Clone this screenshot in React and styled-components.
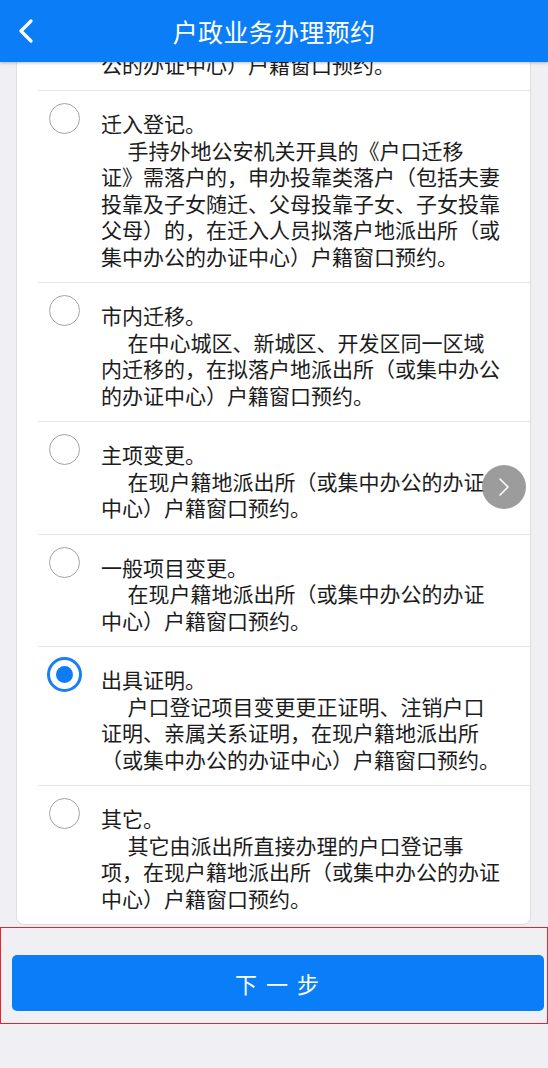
import React, { useState } from "react";
import styled, { createGlobalStyle } from "styled-components";

const GlobalStyle = createGlobalStyle`
    html, body {
        margin: 0;
        padding: 0;
        background: #efeff4;
        font-family: "Noto Sans CJK SC", "Noto Sans", sans-serif;
    }
`;

const items = [
    {
        id: "birth",
        title: "出生登记。",
        desc: "新生儿申报出生登记的，在其父亲或母亲常住户口所在地的辖区派出所（或集中办公的办证中心）户籍窗口预约。",
    },
    {
        id: "movein",
        title: "迁入登记。",
        desc: "手持外地公安机关开具的《户口迁移证》需落户的，申办投靠类落户（包括夫妻投靠及子女随迁、父母投靠子女、子女投靠父母）的，在迁入人员拟落户地派出所（或集中办公的办证中心）户籍窗口预约。",
    },
    {
        id: "city",
        title: "市内迁移。",
        desc: "在中心城区、新城区、开发区同一区域内迁移的，在拟落户地派出所（或集中办公的办证中心）户籍窗口预约。",
    },
    {
        id: "main",
        title: "主项变更。",
        desc: "在现户籍地派出所（或集中办公的办证中心）户籍窗口预约。",
    },
    {
        id: "normal",
        title: "一般项目变更。",
        desc: "在现户籍地派出所（或集中办公的办证中心）户籍窗口预约。",
    },
    {
        id: "proof",
        title: "出具证明。",
        desc: "户口登记项目变更更正证明、注销户口证明、亲属关系证明，在现户籍地派出所（或集中办公的办证中心）户籍窗口预约。",
    },
    {
        id: "other",
        title: "其它。",
        desc: "其它由派出所直接办理的户口登记事项，在现户籍地派出所（或集中办公的办证中心）户籍窗口预约。",
    },
];

const App = () => {
    const [selected, setSelected] = useState("proof");

    return (
        <Page>
            <GlobalStyle />
            <Header>
                <BackBtn aria-label="back">
                    <svg width="16" height="24" viewBox="0 0 16 24">
                        <path
                            d="M13 2 L3 12 L13 22"
                            fill="none"
                            stroke="#fff"
                            strokeWidth="3.2"
                            strokeLinecap="round"
                            strokeLinejoin="round"
                        />
                    </svg>
                </BackBtn>
                <Title>户政业务办理预约</Title>
                <span />
            </Header>

            <Scroller>
                <Card>
                    {items.map((item, i) => (
                        <Item
                            key={item.id}
                            $first={i === 0}
                            onClick={() => setSelected(item.id)}
                        >
                            <Radio $checked={selected === item.id}>
                                {selected === item.id && <Dot />}
                            </Radio>
                            <Text>
                                <ItemTitle>{item.title}</ItemTitle>
                                <Desc>{item.desc}</Desc>
                            </Text>
                        </Item>
                    ))}
                </Card>
            </Scroller>

            <Footer>
                <NextButton>下 一 步</NextButton>
            </Footer>

            {/* floating page switch */}
            <FloatNext aria-label="next">
                <svg width="12" height="20" viewBox="0 0 12 20">
                    <path
                        d="M2 2 L10 10 L2 18"
                        fill="none"
                        stroke="#fff"
                        strokeWidth="1.6"
                        strokeLinecap="round"
                        strokeLinejoin="round"
                    />
                </svg>
            </FloatNext>
        </Page>
    );
};

export default App;

const Page = styled.div`
    width: 548px;
    height: 1068px;
    display: flex;
    flex-direction: column;
    background: #efeff4;
    overflow: hidden;
`;

const Header = styled.header`
    position: relative;
    z-index: 2;
    flex-shrink: 0;
    height: 62px;
    display: grid;
    grid-template-columns: 60px 1fr 60px;
    align-items: center;
    background: #0b7df7;
    box-shadow: 0 1px 3px rgba(0, 0, 0, 0.25);
`;

const BackBtn = styled.button`
    display: flex;
    align-items: center;
    justify-content: flex-start;
    padding: 0 0 0 18px;
    height: 100%;
    border: none;
    background: transparent;
`;

const Title = styled.h1`
    margin: 0 0 0;
    text-align: center;
    color: #fff;
    font-size: 25px;
    font-weight: 400;
    letter-spacing: 0.3px;
`;

const Scroller = styled.div`
    height: 865px;
    flex-shrink: 0;
    display: flex;
    flex-direction: column;
    justify-content: flex-end;
    overflow: hidden;
    padding: 0 17px 2px 16px;
    box-sizing: border-box;
`;

const Card = styled.div`
    flex-shrink: 0;
    background: #fff;
    border: 1px solid #dedede;
    border-radius: 8px;
`;

const Item = styled.div`
    display: flex;
    gap: 21px;
    margin-left: 21px;
    padding: 12px 27px 13px 11px;
    border-top: ${(props) => (props.$first ? "none" : "1px solid #e6e6e6")};
    cursor: pointer;
`;

const Radio = styled.div`
    flex-shrink: 0;
    box-sizing: border-box;
    width: ${(props) => (props.$checked ? "35px" : "31px")};
    height: ${(props) => (props.$checked ? "35px" : "31px")};
    margin: ${(props) => (props.$checked ? "-2px -2px 0" : "0")};
    border-radius: 50%;
    border: ${(props) =>
        props.$checked ? "3px solid #1a7ef5" : "1.5px solid #a4a4a4"};
    display: flex;
    align-items: center;
    justify-content: center;
    background: #fff;
`;

const Dot = styled.div`
    width: 17px;
    height: 17px;
    border-radius: 50%;
    background: #0f7bf4;
`;

const Text = styled.div`
    flex: 1;
    min-width: 0;
    margin-top: 7px;
    color: #1c1c1c;
    font-size: 21px;
    line-height: 26.5px;
    text-spacing-trim: space-all;
`;

const ItemTitle = styled.div``;

const Desc = styled.div`
    text-indent: 26.5px;
`;

const Footer = styled.div`
    flex-shrink: 0;
    height: 97px;
    box-sizing: border-box;
    border: 1px solid #e3262b;
    padding: 27px 3px 12px 11px;
`;

const NextButton = styled.button`
    display: block;
    width: 100%;
    height: 56px;
    border: none;
    border-radius: 5px;
    background: #0a7ef9;
    color: #fff;
    font-family: "Noto Sans CJK SC", "Noto Sans", sans-serif;
    font-size: 22px;
    letter-spacing: 2px;
    cursor: pointer;
`;

const FloatNext = styled.button`
    position: fixed;
    left: 482px;
    top: 465px;
    width: 44px;
    height: 44px;
    padding: 0;
    border: none;
    border-radius: 50%;
    background: rgba(145, 145, 145, 0.9);
    display: flex;
    align-items: center;
    justify-content: center;
`;
